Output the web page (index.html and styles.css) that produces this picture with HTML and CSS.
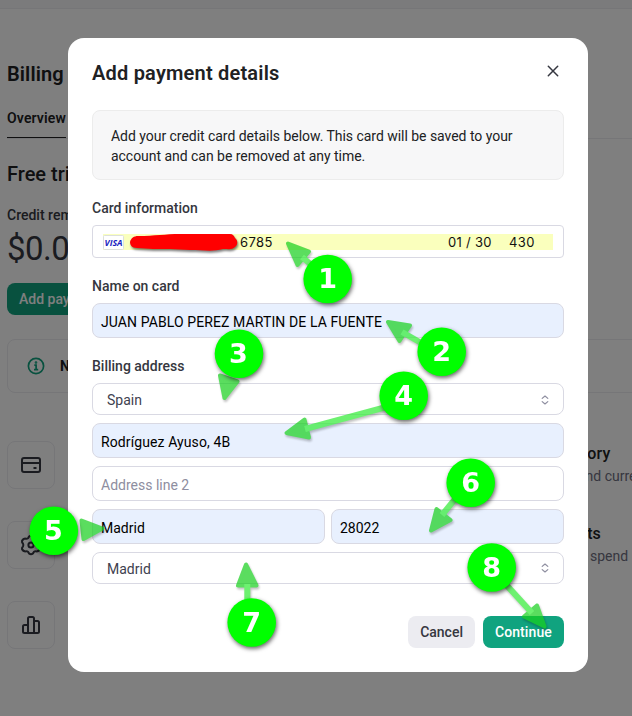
FILE: index.html
```html
<!DOCTYPE html>
<html lang="en">
<head>
<meta charset="utf-8">
<title>Billing</title>
<link rel="stylesheet" href="styles.css">
</head>
<body>
<main class="page">
  <div class="topbar"></div>
  <h1 class="page-title">Billing</h1>
  <nav class="tabs"><span class="tab">Overview</span></nav>
  <h2 class="plan">Free trial</h2>
  <div class="credit-label">Credit remaining</div>
  <div class="credit">$0.00</div>
  <div><span class="btn btn-green add">Add payment</span></div>
  <div class="notice">
    <svg width="18" height="18" viewBox="0 0 18 18" fill="none" stroke="#10a37f" stroke-width="1.7"><circle cx="9" cy="9" r="7.6"/><path d="M7.3 8.2H9.1V12.4M7 12.6H11.2"/><circle cx="9" cy="5.5" r=".5"/></svg>
    <strong>Note</strong>
  </div>
  <div class="links">
    <div class="tile"><svg width="24" height="24" viewBox="0 0 24 24" fill="none" stroke="#353740" stroke-width="2" stroke-linejoin="round"><rect x="3" y="5" width="18" height="14" rx="2"/><path d="M3 10H21M14.5 15H17.5"/></svg></div>
    <div class="link-text history"><b>history</b><span>and current</span></div>
    <div class="tile"><svg width="24" height="24" viewBox="0 0 24 24" fill="none" stroke="#353740" stroke-width="2" stroke-linejoin="round"><path d="M10 3.6Q12 2 14 3.6L15 5.2Q16 6 17.4 5.6Q20 5.6 21 8Q21.2 9.6 20 10.6Q19.3 12 20 13.4Q21.2 14.4 21 16Q20 18.4 17.4 18.4Q16 18 15 18.8L14 20.4Q12 22 10 20.4L9 18.8Q8 18 6.6 18.4Q4 18.4 3 16Q2.8 14.4 4 13.4Q4.7 12 4 10.6Q2.8 9.6 3 8Q4 5.6 6.6 5.6Q8 6 9 5.2Z"/><circle cx="12" cy="12" r="2.6"/></svg></div>
    <div class="link-text limits"><b>limits</b><span>spend</span></div>
    <div class="tile"><svg width="24" height="24" viewBox="0 0 24 24" fill="none" stroke="#353740" stroke-width="2" stroke-linejoin="round"><path d="M9 20H5.5Q4 20 4 18.5V13.5Q4 12 5.5 12H9ZM9 20V5.5Q9 4 10.5 4H13.5Q15 4 15 5.5V20ZM15 8H18.5Q20 8 20 9.5V18.5Q20 20 18.5 20H15"/></svg></div>
  </div>
</main>

<div class="overlay">
  <section class="modal">
    <header class="modal-head">
      <h2>Add payment details</h2>
      <svg width="12" height="12" viewBox="0 0 12 12" stroke="#353740" stroke-width="1.5" stroke-linecap="round"><path d="M1.3 1.3L10.7 10.7M10.7 1.3L1.3 10.7"/></svg>
    </header>
    <p class="info"><span class="line1">Add your credit card details below. This card will be saved to your</span><br><span class="line2">account and can be removed at any time.</span></p>
    <div class="label l-card">Card information</div>
    <div class="card-field">
      <div class="card-fill">
        <svg class="visa" width="21" height="16" viewBox="0 0 21 16"><rect x=".5" y="1.5" width="20" height="14" rx="1" fill="#fff" stroke="#dde0dc"/><text x="1.500" y="12" textLength="18" lengthAdjust="spacingAndGlyphs">VISA</text></svg>
        <span class="digits">6785</span>
        <span class="expiry">01 / 30</span>
        <span class="cvc">430</span>
      </div>
    </div>
    <div class="label l-name">Name on card</div>
    <div class="field filled name">JUAN PABLO PEREZ MARTIN DE LA FUENTE</div>
    <div class="label l-addr">Billing address</div>
    <div class="address">
      <div class="select country"><span>Spain</span><svg width="8" height="10" viewBox="0 0 8 10" fill="none" stroke="#8e8ea0" stroke-width="1.2" stroke-linecap="round" stroke-linejoin="round"><path d="M1.2 3.4L4 1L6.8 3.4M1.2 6.6L4 9L6.8 6.6"/></svg></div>
      <div class="field filled street">Rodríguez Ayuso, 4B</div>
      <div class="field placeholder">Address line 2</div>
      <div class="pair"><div class="field filled">Madrid</div><div class="field filled zip">28022</div></div>
      <div class="select"><span>Madrid</span><svg width="8" height="10" viewBox="0 0 8 10" fill="none" stroke="#8e8ea0" stroke-width="1.2" stroke-linecap="round" stroke-linejoin="round"><path d="M1.2 3.4L4 1L6.8 3.4M1.2 6.6L4 9L6.8 6.6"/></svg></div>
    </div>
    <footer class="actions"><span class="btn btn-gray">Cancel</span><span class="btn btn-green continue">Continue</span></footer>
  </section>
</div>

<svg class="marks" width="632" height="716" viewBox="0 0 632 716">
  <path class="shadow" fill="#f00" d="M130 242C131 238 134 236 138 236C155 236 165 234 180 234H230C233 234 234 236 235 238C238 240 238 245 235 247C232 250 229 249 223 249C213 252 202 250 190 250L170 249H153L137 248C132 248 130 245 130 242Z"/>
  <g class="arrow"><path d="M288 243.5L309 251.5L297.5 265Z"/><line x1="302" y1="257" x2="320" y2="272"/></g>
  <g class="arrow"><path d="M388 322L410 325.5L399.5 341Z"/><line x1="402" y1="332" x2="430" y2="348"/></g>
  <g class="arrow"><path d="M220 375.5L237.5 381.5L224.5 398Z"/></g>
  <g class="arrow"><path d="M286.5 433L304.5 419.5L309 437.5Z"/><line x1="305" y1="429" x2="390" y2="406"/></g>
  <g class="arrow"><path d="M81.5 520.5L102.5 528.5L83.5 539Z"/></g>
  <g class="arrow"><path d="M431 530.5L436.5 509L450.5 520Z"/><line x1="442" y1="515" x2="460" y2="493"/></g>
  <g class="arrow"><path d="M246 564.5L238 585.5L256.5 585.5Z"/><line x1="247.3" y1="584" x2="247.3" y2="605"/></g>
  <g class="arrow"><path d="M544.5 626.5L537 605.5L524 616.5Z"/><line x1="532" y1="613" x2="500" y2="578"/></g>
  <g class="badge"><circle cx="327.7" cy="279" r="24.3"/><text x="327.7" y="288">1</text></g>
  <g class="badge"><circle cx="441.7" cy="351.7" r="24.3"/><text x="441.7" y="361">2</text></g>
  <g class="badge"><circle cx="239" cy="353.7" r="24.3"/><text x="238.5" y="363">3</text></g>
  <g class="badge"><circle cx="403.7" cy="395.7" r="24.3"/><text x="403.7" y="405">4</text></g>
  <g class="badge"><circle cx="53.8" cy="530.7" r="24.3"/><text x="53.5" y="540">5</text></g>
  <g class="badge"><circle cx="470.7" cy="482.7" r="24.3"/><text x="470.7" y="492">6</text></g>
  <g class="badge"><circle cx="251.7" cy="622.5" r="24.3"/><text x="251.7" y="632">7</text></g>
  <g class="badge"><circle cx="491.7" cy="567.5" r="24.3"/><text x="491.7" y="577">8</text></g>
</svg>
</body>
</html>
```

FILE: styles.css
```css
* { box-sizing: border-box; }
body {
  margin: 0;
  width: 632px;
  height: 716px;
  overflow: hidden;
  position: relative;
  background: #fff;
  color: #202123;
  font: 14px/20px Roboto, "Liberation Sans", sans-serif;
}
h1, h2, p { margin: 0; }

.page { height: 716px; padding-left: 7px; overflow: hidden; }
.topbar { height: 9px; margin-left: -7px; background: #f7f7f8; border-bottom: 1px solid #ececf1; }
.page-title { margin-top: 51px; font-size: 20px; line-height: 28px; font-weight: 600; letter-spacing: .1px; }
.tabs { height: 39px; margin-top: 12px; border-bottom: 1px solid #ececf1; display: flex; }
.tab { height: 38px; padding-top: 8px; border-bottom: 1px solid #202123; font-weight: 600; width: 59px; letter-spacing: .15px; }
.plan { margin-top: 21px; font-size: 20px; line-height: 28px; font-weight: 500; }
.credit-label { margin-top: 17px; font-weight: 500; color: #353740; }
.credit { height: 40px; margin-top: 4px; font-size: 33px; line-height: 40px; letter-spacing: -.5px; color: #353740; }
.notice {
  height: 54px; margin-top: 24px; padding-left: 19px; margin-right: -8px;
  border: 1px solid #ececf1; border-radius: 8px;
  display: flex; align-items: center; gap: 15px;
}
.links { margin-top: 48px; display: grid; grid-template-columns: 48px 1fr; grid-auto-rows: 48px; row-gap: 32px; }
.tile { border: 1px solid #ececf1; border-radius: 8px; display: flex; align-items: center; justify-content: center; }
.link-text { padding-top: 2px; display: grid; grid-auto-rows: 22px; line-height: 22px; white-space: nowrap; color: #6e6e80; }
.link-text b { font-size: 16px; font-weight: 500; color: #202123; }
.history b { margin-left: 505px; letter-spacing: .2px; }
.history span { margin-left: 523px; }
.limits b { margin-left: 506px; }
.limits span { margin-left: 535px; }

.btn {
  display: inline-flex; align-items: center; height: 32px; padding: 0 12px;
  border-radius: 8px; font-weight: 500;
}
.btn-green { background: #10a37f; color: #fff; }
.btn-gray { background: #ececf1; color: #353740; }
.continue { width: 81px; letter-spacing: .08px; }
.add { margin-top: 14px; vertical-align: top; }

.overlay { position: absolute; inset: 0; padding: 38px 44px 0 68px; background: rgba(0, 0, 0, .5); }
.modal { height: 634px; padding: 24px; border-radius: 16px; background: #fff; display: flex; flex-direction: column; }
.modal-head { height: 22px; display: flex; align-items: center; justify-content: space-between; padding-right: 5px; }
.modal-head h2 { font-size: 20px; line-height: 22px; font-weight: 600; letter-spacing: .2px; }
.modal-head svg { margin-top: -4px; }
.info {
  height: 70px; margin-top: 26px; padding: 15px 18px; white-space: nowrap;
  background: #f7f7f8; border: 1px solid #ececec; border-radius: 8px; color: #202123;
}
.line1, .line2 { letter-spacing: -.035px; }
.label { height: 20px; font-weight: 500; color: #353740; }
.l-card, .l-name, .l-addr { margin-top: 18px; }
.card-field { height: 33px; margin-top: 7px; padding: 8px 10px; border: 1px solid #d9d9e3; border-radius: 4px; }
.card-fill {
  height: 16px; display: flex; align-items: center; background: #faffbd;
  font: 13px/16px Inter, sans-serif; letter-spacing: .4px; color: #111;
}
.visa text { font: italic bold 8px "Open Sans", sans-serif; letter-spacing: 0; fill: #1a1fc0; }
.digits { width: 208px; margin-left: 116px; }
.expiry { width: 61px; letter-spacing: .3px; }
.field {
  height: 35px; padding: 1px 8px 0; border: 1px solid #d9d9e3; border-radius: 8px;
  line-height: 34px; white-space: nowrap; color: #000;
}
.filled { background: #e8f0fe; }
.placeholder { color: #8e8ea0; }
.name { margin-top: 7px; letter-spacing: .1px; }
.street { letter-spacing: .1px; }
.address { margin-top: 7px; display: grid; gap: 8px; }
.select {
  height: 32px; padding: 1px 14px 0; border: 1px solid #d9d9e3; border-radius: 8px;
  display: flex; align-items: center; justify-content: space-between; color: #40414f;
}
.select svg { margin-top: -1px; }
.country { padding-top: 2px; }
.pair { display: grid; grid-template-columns: 1fr 1fr; gap: 6px; }
.actions { margin-top: 32px; display: flex; justify-content: flex-end; gap: 8px; }

.marks { position: absolute; inset: 0; }
.shadow { filter: drop-shadow(1px 2px 1px rgba(0, 0, 0, .5)); }
.arrow { opacity: .7; filter: drop-shadow(1px 2px 1px rgba(0, 0, 0, .35)); }
.arrow path { fill: #16d01c; stroke: #16d01c; stroke-width: 4; stroke-linejoin: round; }
.arrow line { stroke: #30ec35; stroke-width: 6; }
.badge { filter: drop-shadow(1px 2px 2px rgba(0, 0, 0, .6)); }
.badge circle { fill: #0f0; }
.badge text { font: bold 27px "DejaVu Sans", sans-serif; fill: #fff; text-anchor: middle; }
```
